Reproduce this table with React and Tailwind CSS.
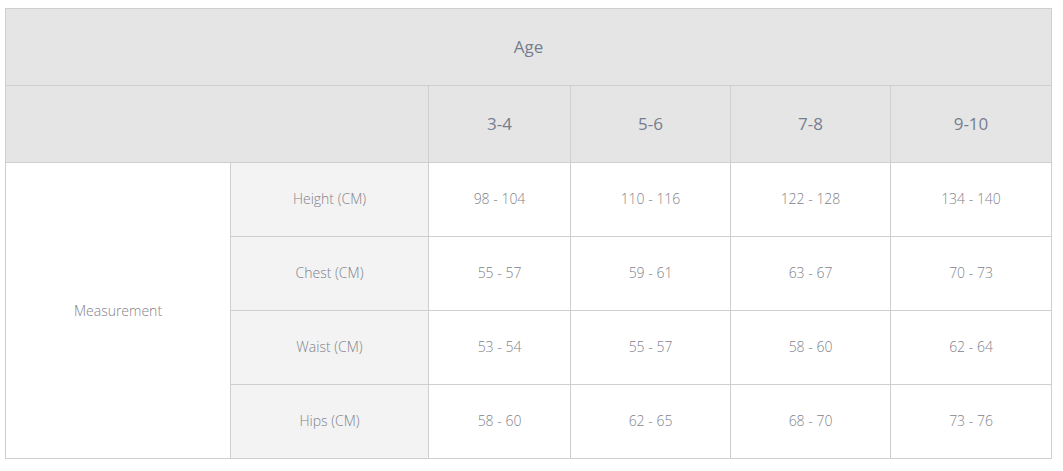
import React from "react";

const ages = ["3-4", "5-6", "7-8", "9-10"];
const rows = [
  ["Height (CM)", "98 - 104", "110 - 116", "122 - 128", "134 - 140"],
  ["Chest (CM)", "55 - 57", "59 - 61", "63 - 67", "70 - 73"],
  ["Waist (CM)", "53 - 54", "55 - 57", "58 - 60", "62 - 64"],
  ["Hips (CM)", "58 - 60", "62 - 65", "68 - 70", "73 - 76"],
];

export default function App() {
  return (
    <div className="w-[1063px] h-[471px] bg-white pt-[8px] pl-[5px]" style={{ fontFamily: '"Open Sans", "Noto Sans", sans-serif' }}>
      <div className="grid w-[1047px] bg-[#cfcfcf] p-px gap-px grid-cols-[224px_197px_141px_159px_159px_160px] grid-rows-[76px_76px_73px_73px_73px_73px]">
        <div className="col-span-6 bg-[#e5e5e5] flex items-center justify-center text-[17px] text-[#767e8e]">Age</div>
        <div className="col-span-2 bg-[#e5e5e5]"></div>
        {ages.map((a) => (
          <div key={a} className="bg-[#e5e5e5] flex items-center justify-center text-[17px] text-[#767e8e]">{a}</div>
        ))}
        <div className="row-span-4 bg-white flex items-center justify-center text-[14px] font-light text-[#7f838c]">Measurement</div>
        {rows.map((r) => (
          <React.Fragment key={r[0]}>
            <div className="bg-[#f3f3f3] flex items-center justify-center pb-[3px] text-[14px] font-light text-[#7f838c]">{r[0]}</div>
            {r.slice(1).map((v, i) => (
              <div key={i} className="bg-white flex items-center justify-center pb-[3px] text-[14px] font-light text-[#7f838c]">{v}</div>
            ))}
          </React.Fragment>
        ))}
      </div>
    </div>
  );
}
